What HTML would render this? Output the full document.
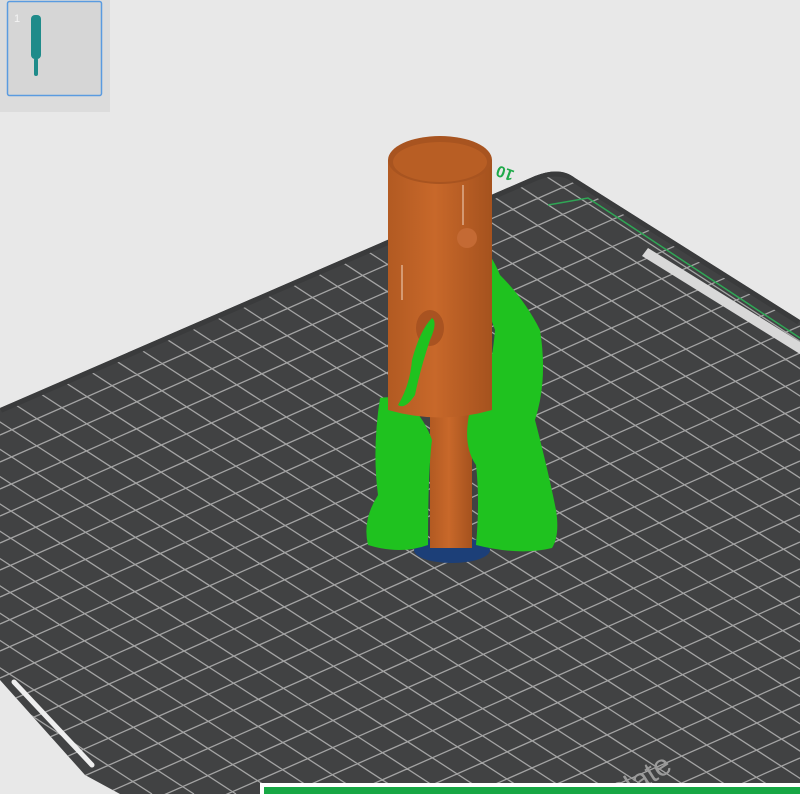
<!DOCTYPE html>
<html><head><style>
html,body{margin:0;padding:0;width:800px;height:794px;overflow:hidden;background:#e8e8e8;font-family:"Liberation Sans",sans-serif}
svg{display:block}
</style></head><body>
<svg width="800" height="794" viewBox="0 0 800 794" xmlns="http://www.w3.org/2000/svg" style="position:absolute;left:0;top:0">
<defs>
<clipPath id="pc"><path d="M0 408 L535 176 Q560 166 575 178 L800 320 L800 794 L120 794 L85 775 L0 680 Z"/></clipPath>
<linearGradient id="cyl" x1="0" x2="1"><stop offset="0" stop-color="#b25a22"/><stop offset=".45" stop-color="#c8682a"/><stop offset="1" stop-color="#a5521e"/></linearGradient>
</defs>
<rect x="0" y="0" width="110" height="112" fill="#dcdcdc"/>
<rect x="7.5" y="1.5" width="94" height="94" rx="2" fill="#d6d6d6" stroke="#5a9be0" stroke-width="1.5"/>
<text x="14" y="22" font-size="11" fill="#f4f4f4">1</text>
<rect x="31" y="15" width="10" height="44" rx="4" fill="#1f8b8a"/>
<rect x="34" y="58" width="4" height="18" rx="2" fill="#1f8b8a"/>
<g clip-path="url(#pc)">
<rect width="800" height="794" fill="#414243"/>
<path stroke="#a4a4a4" stroke-width="1.3" fill="none" d="M0 408L800 56M0 435L800 83M0 462L800 110M0 489L800 137M0 516L800 164M0 543L800 191M0 570L800 218M0 597L800 245M0 624L800 272M0 651L800 299M0 678L800 326M0 705L800 353M0 732L800 380M0 759L800 407M0 786L800 434M0 813L800 461M0 840L800 488M0 867L800 515M0 894L800 542M0 921L800 569M0 948L800 596M0 975L800 623M0 1002L800 650M0 1029L800 677M0 1056L800 704M0 1083L800 731M0 1110L800 758M0 1137L800 785
M-1153 0l1221 794M-1111 0l1221 794M-1069 0l1221 794M-1027 0l1221 794M-985 0l1221 794M-943 0l1221 794M-901 0l1221 794M-859 0l1221 794M-817 0l1221 794M-775 0l1221 794M-733 0l1221 794M-691 0l1221 794M-649 0l1221 794M-607 0l1221 794M-565 0l1221 794M-523 0l1221 794M-481 0l1221 794M-439 0l1221 794M-397 0l1221 794M-355 0l1221 794M-313 0l1221 794M-271 0l1221 794M-229 0l1221 794M-187 0l1221 794M-145 0l1221 794M-103 0l1221 794M-61 0l1221 794M-19 0l1221 794M23 0l1221 794M65 0l1221 794M107 0l1221 794M149 0l1221 794M191 0l1221 794M233 0l1221 794M275 0l1221 794M317 0l1221 794M359 0l1221 794M401 0l1221 794M443 0l1221 794M485 0l1221 794M527 0l1221 794M569 0l1221 794M611 0l1221 794M653 0l1221 794M695 0l1221 794M737 0l1221 794M779 0l1221 794"/>
<path d="M0 408 L535 176 Q560 166 575 178 L800 320" fill="none" stroke="#3a3b3c" stroke-width="10"/>
<text x="600" y="788" font-size="30" fill="#9a9a9a" transform="rotate(-33 640 770)">Plate</text>
</g>
<path d="M548 205 L588 198 L800 338" fill="none" stroke="#2fa655" stroke-width="1.5"/>
<path d="M648 248 L800 342 L800 354 L642 256 Z" fill="#d8d8d8"/>
<line x1="14" y1="682" x2="92" y2="765" stroke="#eeeeee" stroke-width="5" stroke-linecap="round"/>
<text x="486" y="178" font-size="16" font-weight="bold" fill="#1faa4a" transform="rotate(200 500 172)">10</text>
<ellipse cx="452" cy="550" rx="38" ry="13" fill="#1c3f78"/>
<rect x="430" y="410" width="42" height="138" fill="url(#cyl)"/>
<path d="M380 398 Q398 395 410 405 Q425 420 432 440 Q428 470 428 545 Q400 555 368 545 Q362 520 378 495 Q372 450 380 398Z" fill="#1fc21f"/>
<path d="M470 232 Q490 250 500 275 Q525 300 540 330 Q548 380 535 420 Q548 470 556 510 Q560 535 552 548 Q520 556 476 545 Q480 500 476 465 Q462 445 470 410 Q490 390 495 330 Q480 290 470 250 Z" fill="#1fc21f"/>
<path d="M388 160 L388 410 Q440 425 492 410 L492 160 Z" fill="url(#cyl)"/>
<ellipse cx="440" cy="160" rx="52" ry="24" fill="#a85420"/>
<ellipse cx="440" cy="162" rx="47" ry="20" fill="#b85e24"/>
<line x1="402" y1="265" x2="402" y2="300" stroke="#f2d5c0" stroke-width="1"/>
<line x1="463" y1="185" x2="463" y2="225" stroke="#f2d5c0" stroke-width="1"/>
<ellipse cx="430" cy="328" rx="14" ry="18" fill="#a95321"/>
<path d="M412 360 Q420 330 432 318 Q438 322 430 340 Q420 370 415 395 Q405 410 398 405 Q410 385 412 360Z" fill="#1fc21f"/>
<circle cx="467" cy="238" r="10" fill="#c46a34"/>
<rect x="260" y="783" width="540" height="11" fill="#ffffff"/>
<rect x="264" y="787" width="536" height="7" fill="#17a845"/>
</svg>
</body></html>
